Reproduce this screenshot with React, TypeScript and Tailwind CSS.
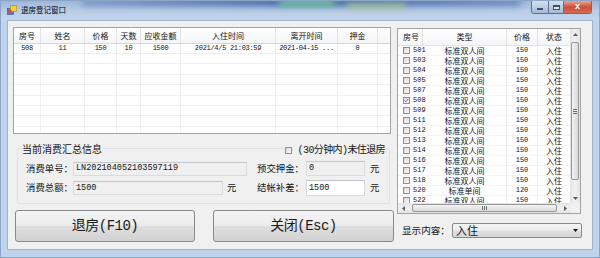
import React from "react";

const leftCols = [
  { t: "房号", w: "w-[27px]" },
  { t: "姓名", w: "w-[44px]" },
  { t: "价格", w: "w-[32px]" },
  { t: "天数", w: "w-[24px]" },
  { t: "应收金额", w: "w-[40px]" },
  { t: "入住时间", w: "w-[95px]" },
  { t: "离开时间", w: "w-[62px]" },
  { t: "押金", w: "w-[40px]" },
];
const leftRow = ["508", "11", "150", "10", "1500", "2021/4/5 21:03:59", "2021-04-15 ...", "0"];

const rooms: [string, string, string][] = [
  ["501", "标准双人间", "150"],
  ["503", "标准双人间", "150"],
  ["504", "标准双人间", "150"],
  ["505", "标准双人间", "150"],
  ["507", "标准双人间", "150"],
  ["508", "标准双人间", "150"],
  ["509", "标准双人间", "150"],
  ["511", "标准双人间", "150"],
  ["512", "标准双人间", "150"],
  ["513", "标准双人间", "150"],
  ["514", "标准双人间", "150"],
  ["516", "标准双人间", "150"],
  ["517", "标准双人间", "150"],
  ["518", "标准双人间", "150"],
  ["520", "标准单间", "120"],
  ["522", "标准双人间", "150"],
];

function Check({ checked = false }: { checked?: boolean }) {
  return (
    <span className="relative flex h-[7px] w-[7px] shrink-0 items-center justify-center border border-[#8e8f8f] bg-gradient-to-br from-[#d9d9d9] to-[#fbfbfb]">
      {checked && (
        <svg viewBox="0 0 8 8" className="h-[7px] w-[7px]">
          <path d="M1.2 4.2 L3 6 L6.8 1.4" fill="none" stroke="#3a4f86" strokeWidth="1.3" />
        </svg>
      )}
    </span>
  );
}

function TextBox({ w, value, white = false, h = "h-[14px]" }: { w: string; value: string; white?: boolean; h?: string }) {
  return (
    <div
      className={`${w} ${h} flex items-center border border-[#d9dbe0] border-t-[#c3c5ca] pl-[2px] text-[8.5px] leading-none ${
        white ? "bg-white" : "bg-[#f0f0f0]"
      }`}
    >
      {value}
    </div>
  );
}

function Label({ w, children }: { w: string; children: React.ReactNode }) {
  return (
    <span className={`${w} whitespace-nowrap font-['Noto_Sans_CJK_SC',sans-serif] text-[9.4px] leading-none`}>{children}</span>
  );
}

function Arrow({ dir }: { dir: "up" | "down" | "left" | "right" }) {
  const d = {
    up: "M0 3 L2.5 0 L5 3 Z",
    down: "M0 0 L5 0 L2.5 3 Z",
    left: "M3 0 L3 5 L0 2.5 Z",
    right: "M0 0 L0 5 L3 2.5 Z",
  }[dir];
  const box = dir === "up" || dir === "down" ? "0 0 5 3" : "0 0 3 5";
  const cls = dir === "up" || dir === "down" ? "h-[3px] w-[5px]" : "h-[5px] w-[3px]";
  return (
    <svg viewBox={box} className={cls}>
      <path d={d} fill="#5a5a5a" />
    </svg>
  );
}

function VScroll() {
  return (
    <div className="flex w-[10px] flex-col bg-gradient-to-r from-[#e3e3e3] via-[#f1f1f1] to-[#e3e3e3]">
      <div className="flex h-[10px] items-center justify-center">
        <Arrow dir="up" />
      </div>
      <div className="flex-1 px-[1px]">
        <div className="mt-[3px] flex h-[138px] flex-col items-center justify-center gap-[1px] rounded-[2px] border border-[#979797] bg-gradient-to-r from-[#f4f4f4] to-[#d9d9d9]">
          <span className="h-px w-[4px] bg-[#6d6d6d]" />
          <span className="h-px w-[4px] bg-[#6d6d6d]" />
          <span className="h-px w-[4px] bg-[#6d6d6d]" />
        </div>
      </div>
      <div className="flex h-[10px] items-center justify-center">
        <Arrow dir="down" />
      </div>
    </div>
  );
}

function HScroll() {
  return (
    <div className="flex h-[10px] w-[172px] bg-gradient-to-b from-[#e3e3e3] via-[#f1f1f1] to-[#e3e3e3]">
      <div className="flex w-[10px] items-center justify-center">
        <Arrow dir="left" />
      </div>
      <div className="flex-1 py-[1px]">
        <div className="ml-[4px] flex h-full w-[145px] items-center justify-center gap-[1px] rounded-[2px] border border-[#979797] bg-gradient-to-b from-[#f4f4f4] to-[#d9d9d9]">
          <span className="h-[4px] w-px bg-[#6d6d6d]" />
          <span className="h-[4px] w-px bg-[#6d6d6d]" />
          <span className="h-[4px] w-px bg-[#6d6d6d]" />
        </div>
      </div>
      <div className="flex w-[10px] items-center justify-center">
        <Arrow dir="right" />
      </div>
    </div>
  );
}

function AppIcon() {
  return (
    <svg viewBox="0 0 10 10" className="h-[10px] w-[10px]">
      <rect x="0.5" y="3.5" width="6" height="6" fill="#4f7fd0" stroke="#2c4f8a" strokeWidth="0.6" />
      <rect x="3.5" y="0.5" width="6" height="6" fill="#f4cf3a" stroke="#b08a12" strokeWidth="0.6" />
      <rect x="1.5" y="5" width="3" height="3" fill="#e0463a" />
    </svg>
  );
}

export default function App() {
  return (
    <div className="flex h-[258px] w-[600px] flex-col overflow-hidden border border-[#8ea6c6] bg-[#bfd3ea] font-['Liberation_Mono','Noto_Sans_CJK_SC',monospace] text-[#141414]">
      {/* Aero title bar */}
      <div className="relative flex h-[19px] items-start bg-gradient-to-b from-[#9db6da] via-[#b8cce6] to-[#c4d6ec]">
        <div aria-hidden className="pointer-events-none absolute inset-0 overflow-hidden">
          <div className="absolute left-[80px] top-[-3px] h-[8px] w-[440px] rounded-full bg-gradient-to-r from-[#7c99c9] via-[#3d61a4] to-[#6b8bc3] blur-[3px]" />
          <div className="absolute left-[278px] top-[-2px] h-[7px] w-[56px] rounded-full bg-[#6fc79c] blur-[3px]" />
          <div className="absolute left-[345px] top-[3px] h-[4px] w-[60px] rounded-full bg-[#a9d37e] blur-[3px]" />
        </div>
        <div className="relative ml-[6px] mt-[4px] flex items-center gap-[4px]">
          <AppIcon />
          <span className="font-['Noto_Sans_CJK_SC',sans-serif] text-[7.5px] leading-none text-black">退房登记窗口</span>
        </div>
        <div className="relative ml-auto mr-[7px] flex h-[13px] overflow-hidden rounded-b-[3px] border border-t-0 border-[#5c7290]">
          <div className="flex w-[16px] items-end justify-center bg-gradient-to-b from-[#d5e1f0] to-[#a3b9d7] pb-[3px]">
            <span className="h-[2px] w-[6px] border border-[#3d4f6a] bg-white" />
          </div>
          <div className="flex w-[15px] items-center justify-center border-l border-[#5c7290] bg-gradient-to-b from-[#d5e1f0] to-[#a3b9d7]">
            <span className="h-[5px] w-[7px] border border-[#3d4f6a] border-t-2 bg-white/60" />
          </div>
          <div className="flex w-[28px] items-center justify-center border-l border-[#5c7290] bg-gradient-to-b from-[#e8a595] via-[#c8503a] to-[#d66a4e] text-[9px] font-bold leading-none text-white">
            x
          </div>
        </div>
      </div>

      {/* client area */}
      <div className="mx-[6px] flex h-[230px] gap-[3px] border border-[#9fb3cb] bg-[#f0f0f0] pl-[5px] pt-[6px]">
        {/* left column */}
        <div className="flex w-[381px] flex-col">
          <div className="h-[107px] w-[378px] overflow-hidden border border-[#a3a3a3] bg-white">
            <div className="flex h-[16px] border-b border-[#d6d6d6] bg-gradient-to-b from-white to-[#f4f5f7]">
              {leftCols.map((c) => (
                <div key={c.t} className={`${c.w} flex items-center justify-center border-r border-[#e3e3e3] font-['Noto_Sans_CJK_SC',sans-serif] text-[8px] leading-none`}>
                  {c.t}
                </div>
              ))}
              <div className="flex-1" />
            </div>
            <div className="flex h-[10px] border-b border-[#eeeeee]">
              {leftCols.map((c, i) => (
                <div key={c.t} className={`${c.w} flex items-center justify-center overflow-hidden whitespace-nowrap border-r border-[#eeeeee] text-[7px] leading-none tracking-[-0.3px]`}>
                  {leftRow[i]}
                </div>
              ))}
              <div className="flex-1" />
            </div>
            {Array.from({ length: 8 }).map((_, r) => (
              <div key={r} className="flex h-[10.4px] border-b border-[#f0f0f0]">
                {leftCols.map((c) => (
                  <div key={c.t} className={`${c.w} border-r border-[#f0f0f0]`} />
                ))}
                <div className="flex-1" />
              </div>
            ))}
          </div>

          {/* summary group */}
          <div className="ml-[4px] mt-[14px] w-[373px] rounded-[3px] border border-[#dde3e9] pb-[7px]">
            <div className="-mt-[6px] flex h-[12px] items-center pl-[3px] pr-[4px]">
              <span className="whitespace-nowrap bg-[#f0f0f0] px-[1px] font-['Noto_Sans_CJK_SC',sans-serif] text-[10px] leading-none">当前消费汇总信息</span>
              <div className="ml-auto mt-[3px] flex items-center gap-[6px] whitespace-nowrap bg-[#f0f0f0] pl-[1px] text-[10px] leading-none">
                <Check />
                <span className="tracking-[-0.6px]">(30分钟内)未住退房</span>
              </div>
            </div>
            <div className="mt-[6px] flex h-[15px] items-center pl-[8px]">
              <Label w="w-[47px]">消费单号：</Label>
              <TextBox w="w-[174px]" value="LN202104052103597119" />
              <span className="ml-[10px]" />
              <Label w="w-[49px]">预交押金：</Label>
              <TextBox w="w-[59px]" h="h-[15px]" value="0" />
              <span className="ml-[5px]" />
              <Label w="w-[12px]">元</Label>
            </div>
            <div className="mt-[4px] flex h-[16px] items-center pl-[8px]">
              <Label w="w-[47px]">消费总额：</Label>
              <TextBox w="w-[150px]" value="1500" />
              <span className="ml-[4px]" />
              <Label w="w-[30px]">元</Label>
              <Label w="w-[49px]">结帐补差：</Label>
              <TextBox w="w-[59px]" h="h-[16px]" value="1500" white />
              <span className="ml-[5px]" />
              <Label w="w-[12px]">元</Label>
            </div>
          </div>

          {/* buttons */}
          <div className="ml-[2px] mt-[6px] flex gap-[18px]">
            <button className="flex h-[32px] w-[180px] items-center justify-center rounded-[3px] border border-[#8a8a8a] bg-[linear-gradient(180deg,#f4f4f4_0%,#ececec_48%,#dedede_52%,#d2d2d2_100%)] text-[14px] leading-none tracking-[-0.5px] text-[#1a1a1a]">
              退房(F10)
            </button>
            <button className="flex h-[32px] w-[181px] items-center justify-center rounded-[3px] border border-[#8a8a8a] bg-[linear-gradient(180deg,#f4f4f4_0%,#ececec_48%,#dedede_52%,#d2d2d2_100%)] text-[14px] leading-none tracking-[-0.5px] text-[#1a1a1a]">
              关闭(Esc)
            </button>
          </div>
        </div>

        {/* right column */}
        <div className="flex w-[185px] flex-col pt-[1px]">
          <div className="flex h-[186px] w-[184px] flex-col border border-[#a3a3a3] bg-white">
            <div className="flex h-[174px]">
              <div className="w-[172px] overflow-hidden">
                <div className="flex h-[17px] border-b border-[#e3e3e3] bg-gradient-to-b from-white to-[#f4f5f7] font-['Noto_Sans_CJK_SC',sans-serif] text-[8px] leading-none">
                  <div className="flex w-[25px] items-center border-r border-[#e3e3e3] pl-[5px]">房号</div>
                  <div className="flex w-[84px] items-center justify-center border-r border-[#e3e3e3]">类型</div>
                  <div className="flex w-[31px] items-center justify-center border-r border-[#e3e3e3]">价格</div>
                  <div className="flex w-[32px] items-center justify-center">状态</div>
                </div>
                {rooms.map(([no, type, price]) => (
                  <div key={no} className="flex h-[10px] overflow-hidden border-b border-[#f3f3f3] leading-none">
                    <div className="flex w-[25px] items-center gap-[3px] border-r border-[#f0f0f0] pl-[5px] text-[7px]">
                      <Check checked={no === "508"} />
                      <span>{no}</span>
                    </div>
                    <div className="flex w-[84px] items-center justify-center border-r border-[#f0f0f0] font-['Noto_Sans_CJK_SC',sans-serif] text-[8px]">
                      {type}
                    </div>
                    <div className="flex w-[31px] items-center justify-center border-r border-[#f0f0f0] text-[7px]">{price}</div>
                    <div className="flex w-[32px] items-center justify-center font-['Noto_Sans_CJK_SC',sans-serif] text-[8px]">
                      入住
                    </div>
                  </div>
                ))}
              </div>
              <VScroll />
            </div>
            <div className="flex h-[10px]">
              <HScroll />
              <div className="w-[10px] bg-[#f0f0f0]" />
            </div>
          </div>

          <div className="mt-[9px] flex h-[15px] items-center">
            <span className="ml-[5px] w-[50px] whitespace-nowrap font-['Noto_Sans_CJK_SC',sans-serif] text-[9.6px] leading-none">显示内容：</span>
            <div className="flex h-[15px] w-[130px] items-center rounded-[2px] border border-[#8a8a8a] bg-[linear-gradient(180deg,#f4f4f4_0%,#ececec_48%,#e0e0e0_52%,#d6d6d6_100%)] pl-[3px] pr-[3px]">
              <span className="font-['Noto_Sans_CJK_SC',sans-serif] text-[11px] leading-none">入住</span>
              <svg viewBox="0 0 5 3" className="ml-auto h-[3px] w-[5px]">
                <path d="M0 0 L5 0 L2.5 3 Z" fill="#111" />
              </svg>
            </div>
          </div>
        </div>
      </div>
    </div>
  );
}
